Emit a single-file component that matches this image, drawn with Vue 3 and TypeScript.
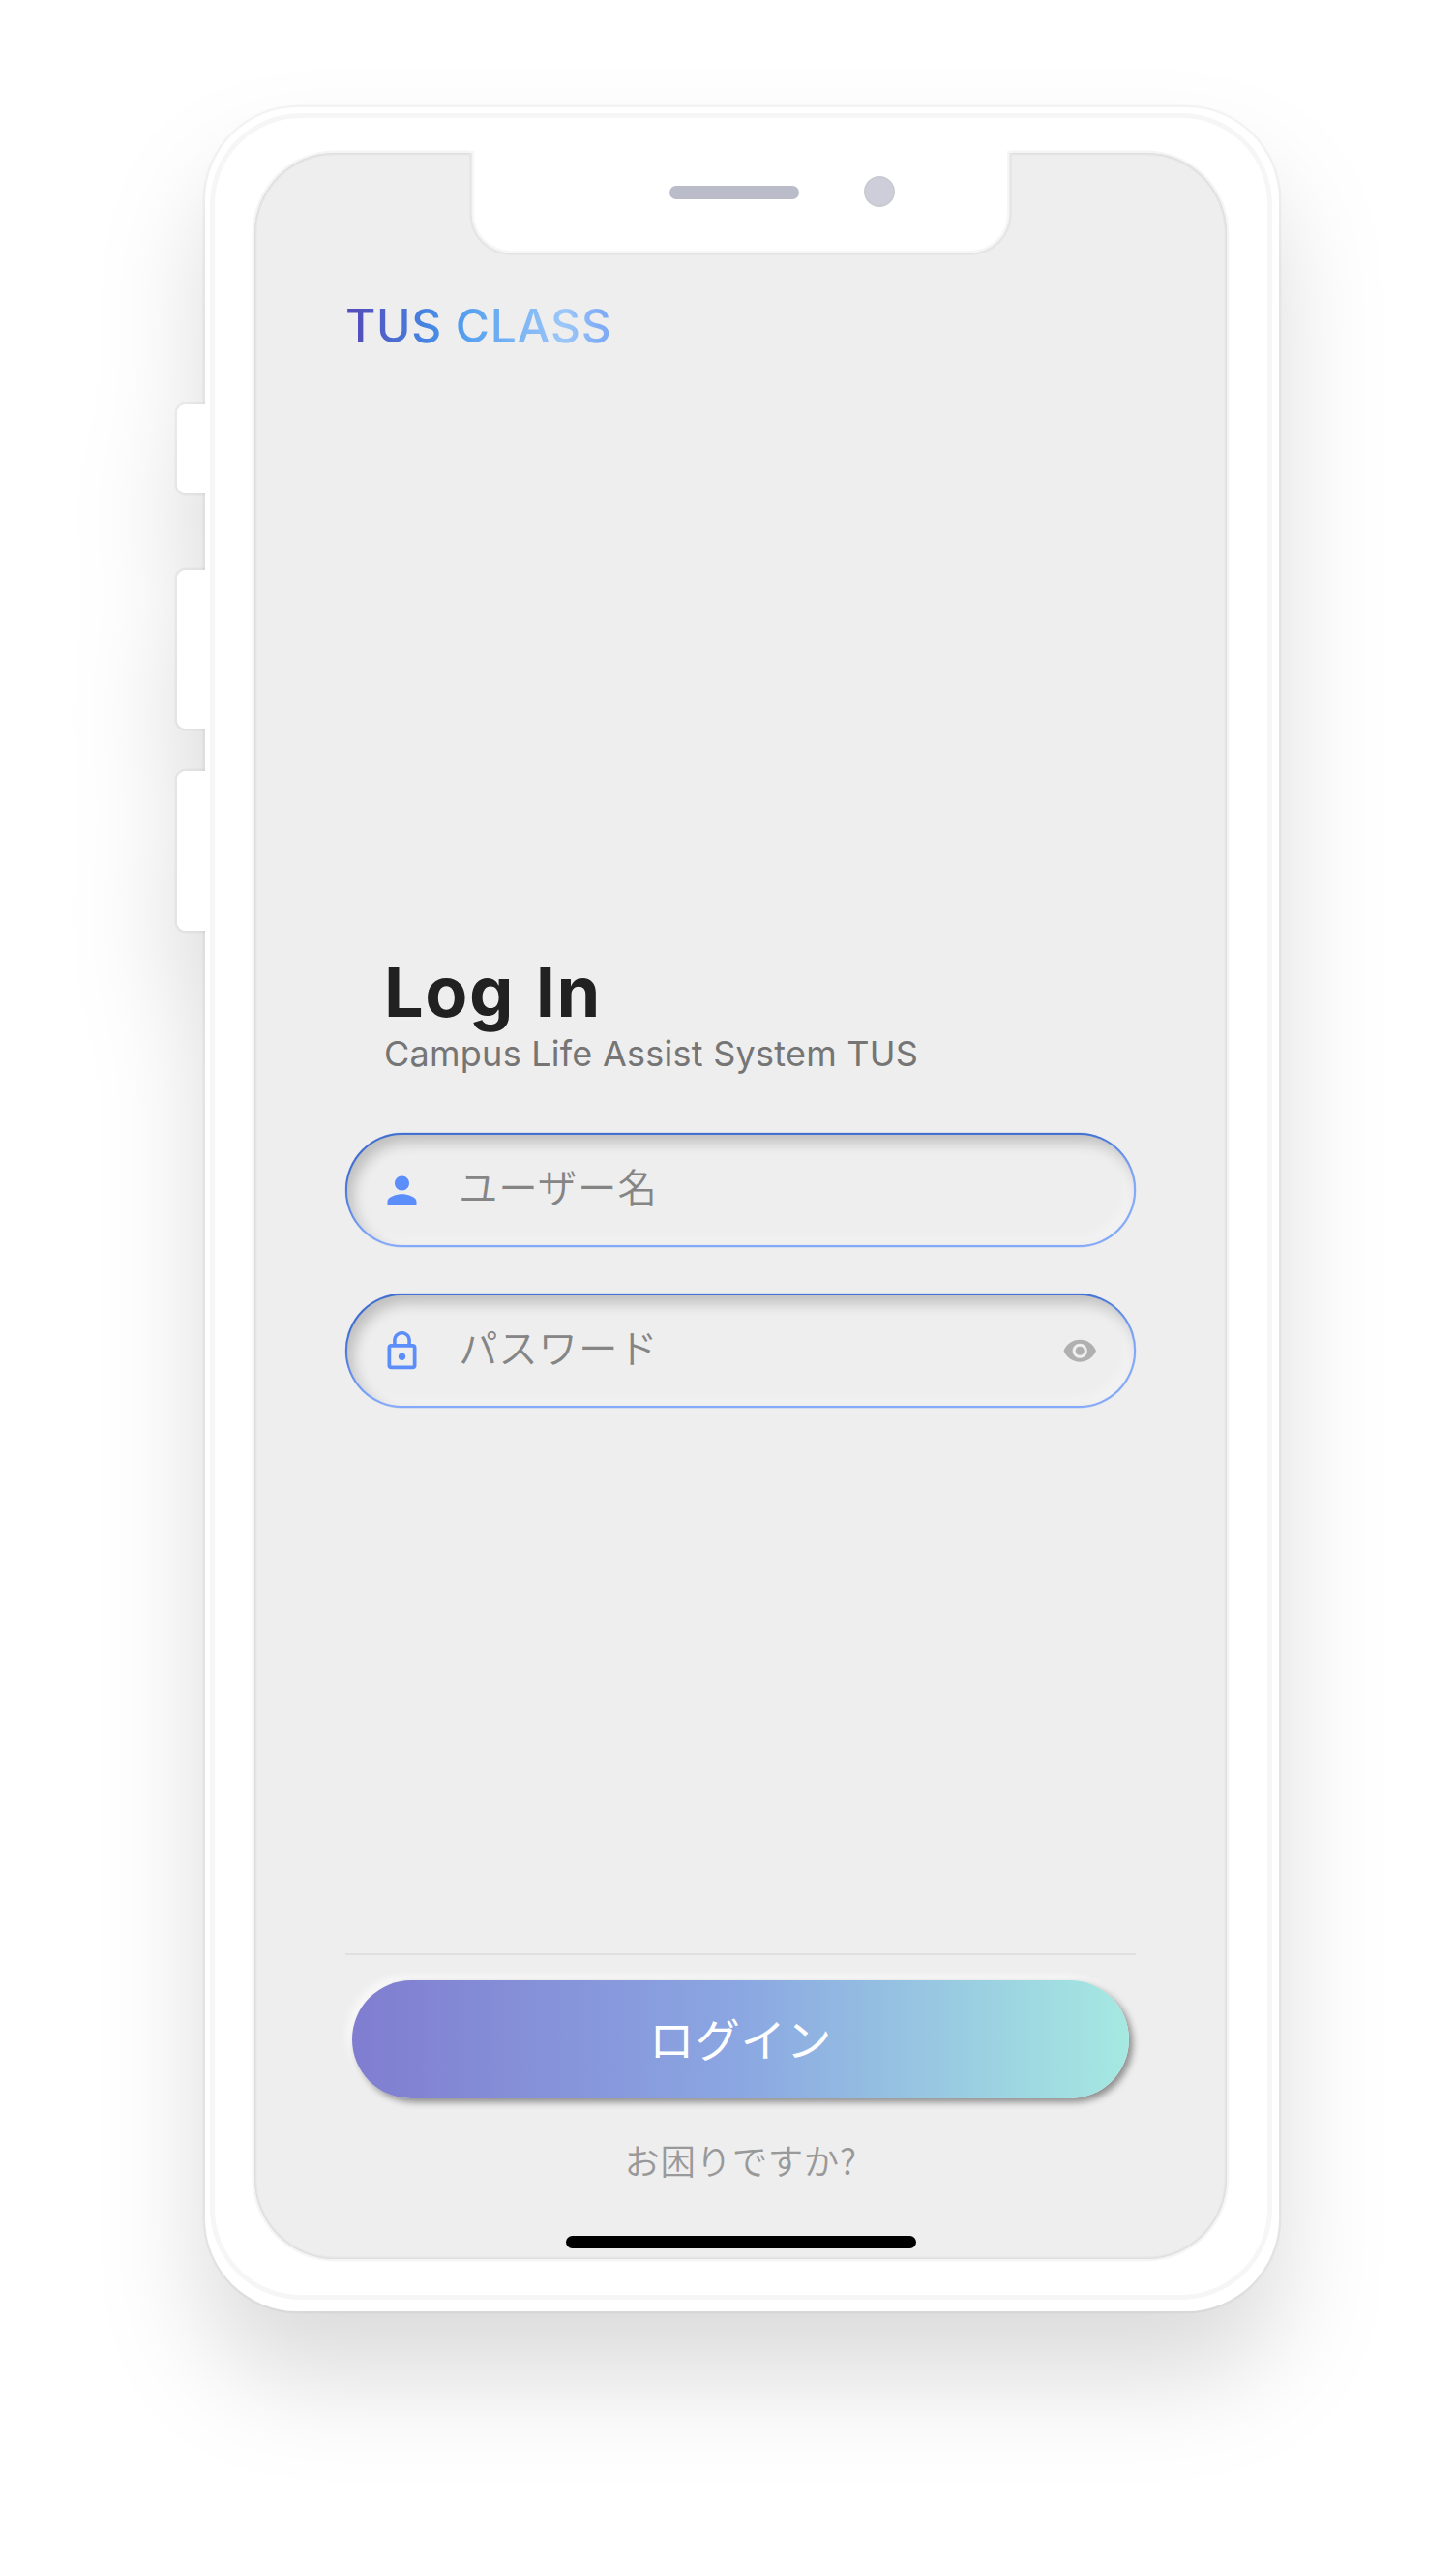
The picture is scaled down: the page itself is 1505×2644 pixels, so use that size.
<script setup lang="ts">
interface Field {
  id: string
  label: string
  icon: string
  revealable: boolean
}

const fields: Field[] = [
  {
    id: 'user',
    label: 'ユーザー名',
    icon: 'M12 12c2.21 0 4-1.79 4-4s-1.79-4-4-4-4 1.79-4 4 1.79 4 4 4zm0 2c-2.67 0-8 1.34-8 4v2h16v-2c0-2.66-5.33-4-8-4z',
    revealable: false,
  },
  {
    id: 'password',
    label: 'パスワード',
    icon: 'M12 17c1.1 0 2-.9 2-2s-.9-2-2-2-2 .9-2 2 .9 2 2 2zm6-9h-1V6c0-2.76-2.24-5-5-5S7 3.24 7 6v2H6c-1.1 0-2 .9-2 2v10c0 1.1.9 2 2 2h12c1.1 0 2-.9 2-2V10c0-1.1-.9-2-2-2zM8.9 6c0-1.71 1.39-3.1 3.1-3.1s3.1 1.39 3.1 3.1v2H8.9V6zM18 20H6V10h12v10z',
    revealable: true,
  },
]

const eye =
  'M12 4.5C7 4.5 2.73 7.61 1 12c1.73 4.39 6 7.5 11 7.5s9.27-3.11 11-7.5c-1.73-4.39-6-7.5-11-7.5zM12 17c-2.76 0-5-2.24-5-5s2.24-5 5-5 5 2.24 5 5-2.24 5-5 5zm0-8c-1.66 0-3 1.34-3 3s1.34 3 3 3 3-1.34 3-3-1.34-3-3-3z'
</script>

<template>
  <div class="stage">
    <div class="phone">
      <span class="side-key mute"></span>
      <span class="side-key volume-up"></span>
      <span class="side-key volume-down"></span>
      <div class="shell">
        <div class="bezel">
          <main class="screen">
            <div class="notch">
              <span class="speaker"></span>
              <span class="camera"></span>
            </div>
            <header><span class="brand">TUS CLASS</span></header>
            <section class="intro">
              <h1>Log In</h1>
              <p>Campus Life Assist System TUS</p>
            </section>
            <form class="fields" @submit.prevent>
              <div v-for="field in fields" :key="field.id" class="field">
                <div class="field-inner">
                  <svg class="lead" viewBox="0 0 24 24"><path :d="field.icon" /></svg>
                  <span class="label">{{ field.label }}</span>
                  <svg v-if="field.revealable" class="eye" viewBox="0 0 24 24"><path :d="eye" /></svg>
                </div>
              </div>
            </form>
            <footer>
              <button class="submit" type="button">ログイン</button>
              <a class="help">お困りですか?</a>
              <span class="home-bar"></span>
            </footer>
          </main>
        </div>
      </div>
    </div>
  </div>
</template>

<style>
body {
  margin: 0;
  background: #fff;
}
</style>

<style scoped>
* {
  box-sizing: border-box;
}

.stage {
  width: 1505px;
  height: 2644px;
  padding: 111px 183px 0 212px;
  overflow: hidden;
  background: #fff;
  font-family: Inter, "Noto Sans CJK JP", sans-serif;
}

.phone {
  position: relative;
  height: 2278px;
  filter: drop-shadow(0 68px 54px rgba(0, 0, 0, 0.14));
}

.side-key {
  position: absolute;
  left: -29px;
  width: 30px;
  border-radius: 9px 0 0 9px;
  background: #fff;
  box-shadow: 0 0 0 2.6px rgba(0, 0, 0, 0.045);
  clip-path: inset(-3px 1px -3px -3px);
}

/* Hides the shell outline where the key joins the frame. */
.side-key::after {
  content: "";
  position: absolute;
  inset: 0;
  border-radius: inherit;
  background: #fff;
}

.mute {
  top: 307px;
  height: 92px;
}

.volume-up {
  top: 478px;
  height: 164px;
}

.volume-down {
  top: 686px;
  height: 165px;
}

.shell {
  height: 100%;
  padding: 6px 7px 12px 5px;
  border-radius: 96px;
  background: #fff;
  box-shadow: 0 0 0 2.6px rgba(0, 0, 0, 0.04);
}

.bezel {
  position: relative;
  height: 100%;
  padding: 36px 42px 37px 41px;
  border: 5px solid #f6f6f6;
  border-radius: 94px;
  background: #fff;
}

.screen {
  position: relative;
  display: flex;
  flex-direction: column;
  height: 100%;
  padding: 151px 94px 11px;
  border-radius: 83px;
  background: #eee;
  box-shadow: 0 0 0 2.4px #f5f5f5, inset 0 0 0 1px #dedede, inset 0 0 0 2.4px #e6e6e6;
}

.notch {
  position: absolute;
  top: -3px;
  left: 227px;
  width: 551px;
  height: 104px;
  border-radius: 0 0 38px 38px;
  background: #fff;
  box-shadow: 0 0 0 2.4px #f6f6f6, 0 0 0 4.8px #e5e5e5;
  clip-path: inset(0 -6px -6px -6px);
}

.notch::before {
  content: "";
  position: absolute;
  top: 0;
  left: -5px;
  right: -5px;
  height: 3px;
  background: linear-gradient(#fff 1px, #f6f6f6 1px);
}

.notch::after {
  content: "";
  position: absolute;
  top: 0;
  left: 0;
  right: 0;
  height: 4px;
  background: #fff;
}

.speaker {
  position: absolute;
  top: 36.5px;
  left: 202px;
  width: 134px;
  height: 14px;
  border-radius: 7px;
  background: #bbbcca;
}

.camera {
  position: absolute;
  top: 27px;
  left: 403px;
  width: 32px;
  height: 32px;
  border: 2px solid #cacbd2;
  border-radius: 50%;
  background: #cdced9;
}

header {
  display: flex;
}

.brand {
  font-size: 48px;
  font-weight: 500;
  line-height: 56px;
  letter-spacing: 0.75px;
  background: linear-gradient(90deg, #5350bd 5%, #4688e4 32%, #57a1f0 46%, #9cc7f8 82%, #7fabf7 96%);
  background-clip: text;
  -webkit-background-clip: text;
  color: transparent;
}

.intro {
  margin-top: 624px;
  padding-left: 40px;
}

h1 {
  margin: 0;
  color: #212121;
  font-size: 72px;
  font-weight: 700;
  line-height: 72px;
  letter-spacing: 1.6px;
  word-spacing: 3px;
}

p {
  margin: 6px 0 0;
  color: #757575;
  font-size: 36px;
  line-height: 44px;
  letter-spacing: 0.25px;
  white-space: nowrap;
}

.fields {
  display: flex;
  flex-direction: column;
  gap: 48px;
  margin-top: 60px;
}

.field {
  height: 118px;
  padding: 2px;
  border-radius: 59px;
  background: #83a9fa;
  box-shadow: 0 0 0 0.4px rgba(110, 150, 240, 0.4), inset 2px 3px 3px #3f6bcb;
}

.field-inner {
  display: flex;
  align-items: center;
  height: 100%;
  padding: 0 38px 0 34px;
  border-radius: 57px;
  background: #eee;
  box-shadow: inset 6px 8px 14px rgba(0, 0, 0, 0.2), inset -6px -6px 14px rgba(255, 255, 255, 0.35);
}

.lead {
  width: 45px;
  height: 45px;
  fill: #5b8dfb;
}

.label {
  margin: -9px 0 0 36px;
  color: #858585;
  font-family: "Noto Sans CJK JP", sans-serif;
  font-size: 40.5px;
  font-weight: 350;
  line-height: 58px;
  letter-spacing: 0.8px;
}

.eye {
  width: 36.5px;
  height: 36.5px;
  margin-left: auto;
  fill: #b0b0b0;
}

footer {
  display: flex;
  flex-direction: column;
  align-items: center;
  margin-top: auto;
  padding-top: 26px;
  border-top: 2.6px solid #dfdfdf;
}

.submit {
  width: 803px;
  height: 122px;
  padding: 0 0 6px;
  border: 0;
  border-radius: 61px;
  background: linear-gradient(90deg, #807dd0, #8ba7e2 50%, #a5e9e1);
  box-shadow: 4px 4px 7px rgba(0, 0, 0, 0.4), -5px -5px 8px rgba(255, 255, 255, 0.65);
  color: #fff;
  font-family: inherit;
  font-size: 46.5px;
  font-weight: 400;
  letter-spacing: 0.8px;
}

.help {
  margin-top: 38px;
  color: #999;
  font-family: "Noto Sans CJK JP", sans-serif;
  font-size: 36.5px;
  font-weight: 350;
  line-height: 52px;
  letter-spacing: 0.6px;
}

.home-bar {
  width: 362px;
  height: 13px;
  margin-top: 52px;
  border-radius: 7px;
  background: #000;
}
</style>
